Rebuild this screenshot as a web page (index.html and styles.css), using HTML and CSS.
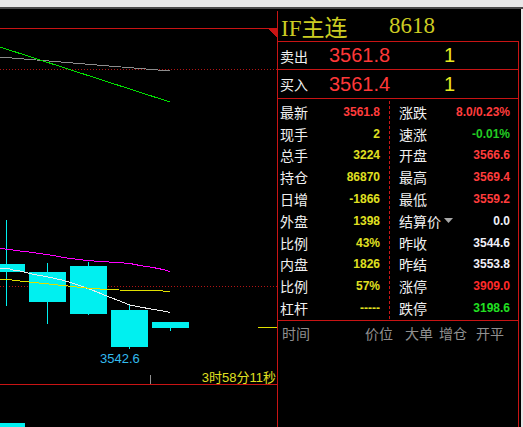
FILE: index.html
```html
<!DOCTYPE html>
<html lang="zh">
<head>
<meta charset="utf-8">
<title>IF主连</title>
<link rel="stylesheet" href="styles.css">
</head>
<body>
<div class="topbar"></div>
<div class="window">
  <div class="chart">
    <svg class="chart-svg" width="277" height="416" viewBox="0 11 277 416" shape-rendering="crispEdges">
      <rect x="0" y="28" width="277" height="1" fill="#c81414"/>
      <polygon points="268,28 277,28 277,38" fill="#c81414"/>
      <line x1="0" y1="69.5" x2="277" y2="69.5" stroke="#b01414" stroke-width="1" stroke-dasharray="1 2"/>
      <line x1="0" y1="286.5" x2="277" y2="286.5" stroke="#b01414" stroke-width="1" stroke-dasharray="1 2"/>
      <line x1="0" y1="57" x2="170" y2="71" stroke="#8c8c8c" stroke-width="1"/>
      <line x1="0" y1="47" x2="170" y2="102" stroke="#00e000" stroke-width="1"/>
      <g fill="#00f0f0">
        <rect x="6" y="220" width="1" height="86"/>
        <rect x="0" y="264" width="25" height="8"/>
        <rect x="47" y="263" width="1" height="61"/>
        <rect x="29" y="272" width="37" height="30"/>
        <rect x="88" y="262" width="1" height="53"/>
        <rect x="70" y="266" width="37" height="48"/>
        <rect x="129" y="304" width="1" height="45"/>
        <rect x="111" y="310" width="37" height="37"/>
        <rect x="170" y="322" width="1" height="9"/>
        <rect x="152" y="322" width="37" height="6"/>
        <rect x="0" y="423" width="25" height="4"/>
      </g>
      <g fill="none" stroke-width="1">
        <polyline stroke="#ff00ff" points="0,248.5 9,249.5 20,251 33,252.5 50,255 67,258 83,260 100,261.5 117,262.5 130,263.5 140,265.5 153,267.5 163,269.5 170,271.5"/>
        <polyline stroke="#ececec" points="0,268 9,268.5 13,270 20,271 27,272.7 33,274.3 43,276 53,278 63,280.3 73,283.3 83,286.7 92,290 110,297.3 130,305 147,308.3 170,312.3"/>
        <polyline stroke="#e0e000" points="0,279.5 12,280 22,281.3 32,282.3 42,283.3 52,284.3 60,285.3 68,286 77,287 87,288 100,289 119,290 150,290.5 170,291.3"/>
      </g>
      <rect x="258" y="327" width="19" height="1" fill="#e0e000"/>
      <text class="low-label" x="100" y="363">3542.6</text>
      <rect x="150" y="375" width="1" height="9" fill="#909090"/>
      <text class="time-label" x="276" y="382" text-anchor="end">3时58分11秒</text>
      <rect x="0" y="384" width="277" height="1" fill="#c81414"/>
    </svg>
  </div>
  <div class="panel">
    <div class="head">
      <span class="code">IF主连</span>
      <span class="vol">8618</span>
    </div>
    <div class="body">
      <div class="quote q1">
        <span class="q-lbl">卖出</span>
        <span class="q-price">3561.8</span>
        <span class="q-qty">1</span>
      </div>
      <div class="quote q2">
        <span class="q-lbl">买入</span>
        <span class="q-price">3561.4</span>
        <span class="q-qty">1</span>
      </div>
      <div class="stats">
        <div class="col col-left">
          <div class="cell"><span class="lbl">最新</span><span class="val red">3561.8</span></div>
          <div class="cell"><span class="lbl">现手</span><span class="val yel">2</span></div>
          <div class="cell"><span class="lbl">总手</span><span class="val yel">3224</span></div>
          <div class="cell"><span class="lbl">持仓</span><span class="val yel">86870</span></div>
          <div class="cell"><span class="lbl">日增</span><span class="val yel">-1866</span></div>
          <div class="cell"><span class="lbl">外盘</span><span class="val yel">1398</span></div>
          <div class="cell"><span class="lbl">比例</span><span class="val yel">43%</span></div>
          <div class="cell"><span class="lbl">内盘</span><span class="val yel">1826</span></div>
          <div class="cell"><span class="lbl">比例</span><span class="val yel">57%</span></div>
          <div class="cell"><span class="lbl">杠杆</span><span class="val yel">-----</span></div>
        </div>
        <div class="col col-right">
          <div class="cell"><span class="lbl">涨跌</span><span class="val red">8.0/0.23%</span></div>
          <div class="cell"><span class="lbl">速涨</span><span class="val grn">-0.01%</span></div>
          <div class="cell"><span class="lbl">开盘</span><span class="val red">3566.6</span></div>
          <div class="cell"><span class="lbl">最高</span><span class="val red">3569.4</span></div>
          <div class="cell"><span class="lbl">最低</span><span class="val red">3559.2</span></div>
          <div class="cell"><span class="lbl">结算价<svg class="drop" width="9" height="5" viewBox="0 0 9 5"><polygon points="0,0 9,0 4.5,5" fill="#a8a8a8"/></svg></span><span class="val wht">0.0</span></div>
          <div class="cell"><span class="lbl">昨收</span><span class="val wht">3544.6</span></div>
          <div class="cell"><span class="lbl">昨结</span><span class="val wht">3553.8</span></div>
          <div class="cell"><span class="lbl">涨停</span><span class="val red2">3909.0</span></div>
          <div class="cell"><span class="lbl">跌停</span><span class="val grn2">3198.6</span></div>
        </div>
      </div>
      <div class="ticks-head">
        <span class="t-time">时间</span>
        <span class="t-price">价位</span>
        <span class="t-big">大单</span>
        <span class="t-add">增仓</span>
        <span class="t-oc">开平</span>
      </div>
    </div>
  </div>
</div>
</body>
</html>
```

FILE: styles.css
```css
* { box-sizing: border-box; }

body {
  margin: 0;
  background: #e8e8e8;
  font-family: "Liberation Sans", "Noto Sans CJK SC", sans-serif;
}

.topbar {
  height: 9px;
  border-bottom: 2px solid #4a4a4a;
}

.window {
  width: 521px;
  height: 418px;
  background: #000;
  display: flex;
  padding-top: 2px;
  overflow: hidden;
}

.chart {
  width: 278px;
  flex: none;
  border-right: 1px solid #c81414;
}

.chart-svg { display: block; }

.low-label {
  font-family: "Liberation Sans", sans-serif;
  font-size: 13px;
  fill: #33bbee;
}

.time-label {
  font-family: "Liberation Sans", "Noto Sans CJK SC", sans-serif;
  font-size: 13px;
  fill: #e0e020;
}

.panel {
  width: 241px;
  flex: none;
  display: flex;
  flex-direction: column;
}

.head {
  height: 30px;
  display: flex;
  align-items: center;
  padding-left: 3px;
  font-family: "Liberation Serif", "Noto Sans CJK SC", serif;
  font-size: 23px;
  color: #cccc22;
}

.head .code { width: 108px; }

.body {
  flex: 1;
  border-right: 1px solid #c81414;
}

.quote {
  display: flex;
  align-items: center;
  border-top: 1px solid #c81414;
  height: 28px;
}

.quote.q2 { height: 29px; }

.q-lbl {
  width: 51px;
  padding-left: 2px;
  font-family: "Noto Sans CJK SC", sans-serif;
  font-size: 14px;
  color: #f0f0f0;
}

.q-price {
  width: 115px;
  font-size: 20px;
  color: #ff3838;
}

.q-qty {
  font-size: 20px;
  color: #e8e820;
}

.stats {
  display: flex;
  border-top: 1px solid #c81414;
  border-bottom: 1px solid #c81414;
  padding-top: 2px;
  padding-bottom: 1px;
}

.col-left {
  width: 111px;
  padding-left: 2px;
  padding-right: 9px;
}

.col-right {
  flex: 1;
  border-left: 1px dashed #c81414;
  padding-left: 9px;
  padding-right: 8px;
}

.cell {
  height: 21.8px;
  display: flex;
  align-items: center;
  justify-content: space-between;
}

.lbl {
  display: flex;
  align-items: center;
  font-family: "Noto Sans CJK SC", sans-serif;
  font-size: 14px;
  color: #f0f0f0;
}

.drop { margin-left: 3px; }

.val {
  font-family: "Liberation Sans", sans-serif;
  font-size: 12px;
  font-weight: bold;
}

.red { color: #ff3c3c; }
.red2 { color: #ff2a2a; }
.yel { color: #e0e020; }
.grn { color: #22cc22; }
.grn2 { color: #22e022; }
.wht { color: #f0f0f8; }

.ticks-head {
  height: 24px;
  display: flex;
  align-items: center;
  padding-left: 4px;
  font-family: "Noto Sans CJK SC", sans-serif;
  font-size: 14px;
  color: #909090;
}

.t-time { width: 83px; }
.t-price { width: 40px; }
.t-big { width: 34px; }
.t-add { width: 37px; }
```
